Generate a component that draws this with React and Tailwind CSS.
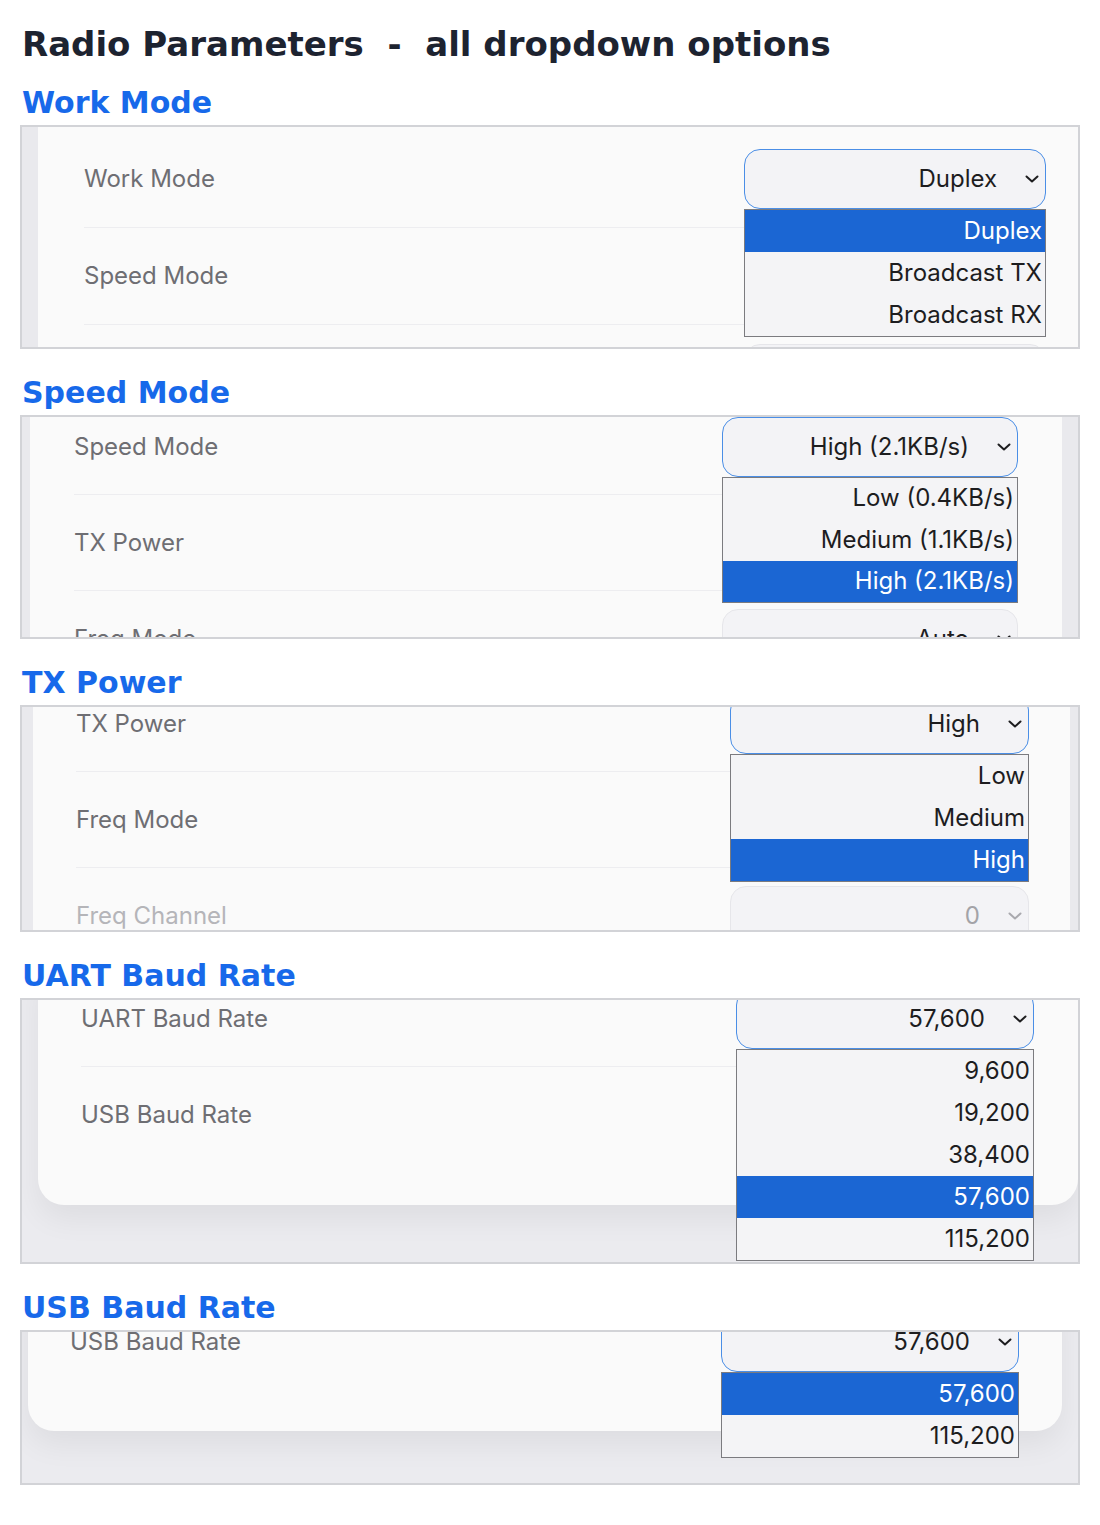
import React from "react";

const heading = { fontFamily: '"DejaVu Sans", "Liberation Sans", sans-serif' };
const ui = { fontFamily: 'Inter, "Noto Sans", "Liberation Sans", sans-serif' };

function Chevron({ muted }) {
  return (
    <svg width="14" height="8" viewBox="0 0 14 8" fill="none" className="shrink-0">
      <path
        d="M1.5 1.5 L7 6.5 L12.5 1.5"
        stroke={muted ? "#a9a9ae" : "#1d1d1f"}
        strokeWidth="2"
        strokeLinecap="round"
        strokeLinejoin="round"
      />
    </svg>
  );
}

// A select field; when `options` is given its open list hangs below it.
function Select({ value, widthClass, focused, disabled, options, selected, itemClass }) {
  return (
    <div className={`relative shrink-0 ${widthClass}`}>
      <div
        className={`h-[60px] rounded-[16px] border bg-[#f3f3f6] flex items-center justify-end gap-[28px] pr-[6px] text-[24px] ${
          focused ? "border-[#4a8ee6]" : "border-[#e6e6ea]"
        } ${disabled ? "text-[#a3a3a8]" : "text-[#1d1d1f]"}`}
      >
        {value && <span>{value}</span>}
        {value && <Chevron muted={disabled} />}
      </div>
      {options && (
        <div className="absolute left-0 right-0 top-full z-10 border border-[#7b7b7f] bg-[#f4f4f6]">
          {options.map((o) => (
            <div
              key={o}
              className={`${itemClass} flex items-center justify-end pr-[3px] text-[24px] ${
                o === selected ? "bg-[#1b66d3] text-white" : "text-[#1d1d1f]"
              }`}
            >
              {o}
            </div>
          ))}
        </div>
      )}
    </div>
  );
}

function Row({ label, rowClass, last, disabled, children }) {
  return (
    <div
      className={`${rowClass} flex items-center justify-between ${
        last ? "" : "border-b border-[#ededf0]"
      }`}
    >
      <span className={`text-[24px] ${disabled ? "text-[#b5b5b9]" : "text-[#6e6e73]"}`}>{label}</span>
      {children}
    </div>
  );
}

function Section({ title, first, children }) {
  return (
    <section className={first ? "mt-[27px]" : "mt-[29px]"}>
      <h2 style={heading} className="pl-[2px] text-[30px] leading-none font-bold text-[#1769ea]">
        {title}
      </h2>
      <div className="mt-[7px]">{children}</div>
    </section>
  );
}

const SPEEDS = ["Low (0.4KB/s)", "Medium (1.1KB/s)", "High (2.1KB/s)"];
const POWERS = ["Low", "Medium", "High"];
const BAUDS = ["9,600", "19,200", "38,400", "57,600", "115,200"];

export default function App() {
  return (
    <div style={ui} className="w-[1100px] min-h-[1525px] bg-white px-[20px] pt-[27px]">
      <h1
        style={heading}
        className="pl-[2px] whitespace-pre text-[34px] leading-none font-bold text-[#1d2330]"
      >
        {"Radio Parameters  -  all dropdown options"}
      </h1>

      <Section title="Work Mode" first>
        <div className="h-[224px] border-2 border-[#d2d3d7] bg-[#e9e9ed] overflow-hidden flex">
          <div className="ml-[16px] flex-1 bg-[#fafafa] pt-[4px] pl-[46px] pr-[32px]">
            <Row label="Work Mode" rowClass="h-[97px]">
              <Select
                value="Duplex"
                widthClass="w-[302px]"
                focused
                options={["Duplex", "Broadcast TX", "Broadcast RX"]}
                selected="Duplex"
                itemClass="h-[42px]"
              />
            </Row>
            <Row label="Speed Mode" rowClass="h-[97px]" />
            <div className="h-[97px] flex items-center justify-end">
              <Select widthClass="w-[302px]" />
            </div>
          </div>
        </div>
      </Section>

      <Section title="Speed Mode">
        <div className="h-[224px] border-2 border-[#d2d3d7] bg-[#e9e9ed] overflow-hidden flex items-start">
          <div className="ml-[8px] mr-[16px] mt-[-18px] flex-1 bg-[#fafafa] pl-[44px] pr-[44px]">
            <Row label="Speed Mode" rowClass="h-[96px]">
              <Select
                value="High (2.1KB/s)"
                widthClass="w-[296px]"
                focused
                options={SPEEDS}
                selected="High (2.1KB/s)"
                itemClass="h-[41.5px]"
              />
            </Row>
            <Row label="TX Power" rowClass="h-[96px]" />
            <Row label="Freq Mode" rowClass="h-[96px]">
              <Select value="Auto" widthClass="w-[296px]" />
            </Row>
          </div>
        </div>
      </Section>

      <Section title="TX Power">
        <div className="h-[227px] border-2 border-[#d2d3d7] bg-[#e9e9ed] overflow-hidden flex items-start">
          <div className="ml-[11px] mr-[8px] mt-[-31px] flex-1 bg-[#fafafa] pl-[43px] pr-[41px]">
            <Row label="TX Power" rowClass="h-[96px]">
              <Select
                value="High"
                widthClass="w-[299px]"
                focused
                options={POWERS}
                selected="High"
                itemClass="h-[42px]"
              />
            </Row>
            <Row label="Freq Mode" rowClass="h-[96px]" />
            <Row label="Freq Channel" rowClass="h-[96px]" disabled>
              <Select value="0" widthClass="w-[299px]" disabled />
            </Row>
          </div>
        </div>
      </Section>

      <Section title="UART Baud Rate">
        <div className="h-[266px] border-2 border-[#d2d3d7] bg-[#ebebef] overflow-hidden flex items-start">
          <div className="ml-[16px] mt-[-29px] flex-1 rounded-b-[26px] bg-[#fafafa] pl-[43px] pr-[44px] pb-[42px] shadow-[0_14px_30px_rgba(0,0,0,0.06)]">
            <Row label="UART Baud Rate" rowClass="h-[96px]">
              <Select
                value="57,600"
                widthClass="w-[298px]"
                focused
                options={BAUDS}
                selected="57,600"
                itemClass="h-[42px]"
              />
            </Row>
            <Row label="USB Baud Rate" rowClass="h-[96px]" last />
          </div>
        </div>
      </Section>

      <Section title="USB Baud Rate">
        <div className="h-[155px] border-2 border-[#d2d3d7] bg-[#ebebef] overflow-hidden flex items-start">
          <div className="ml-[6px] mr-[16px] mt-[-38px] flex-1 rounded-b-[26px] bg-[#fafafa] pl-[42px] pr-[43px] pb-[41px] shadow-[0_14px_30px_rgba(0,0,0,0.06)]">
            <Row label="USB Baud Rate" rowClass="h-[96px]" last>
              <Select
                value="57,600"
                widthClass="w-[298px]"
                focused
                options={["57,600", "115,200"]}
                selected="57,600"
                itemClass="h-[42px]"
              />
            </Row>
          </div>
        </div>
      </Section>
    </div>
  );
}
